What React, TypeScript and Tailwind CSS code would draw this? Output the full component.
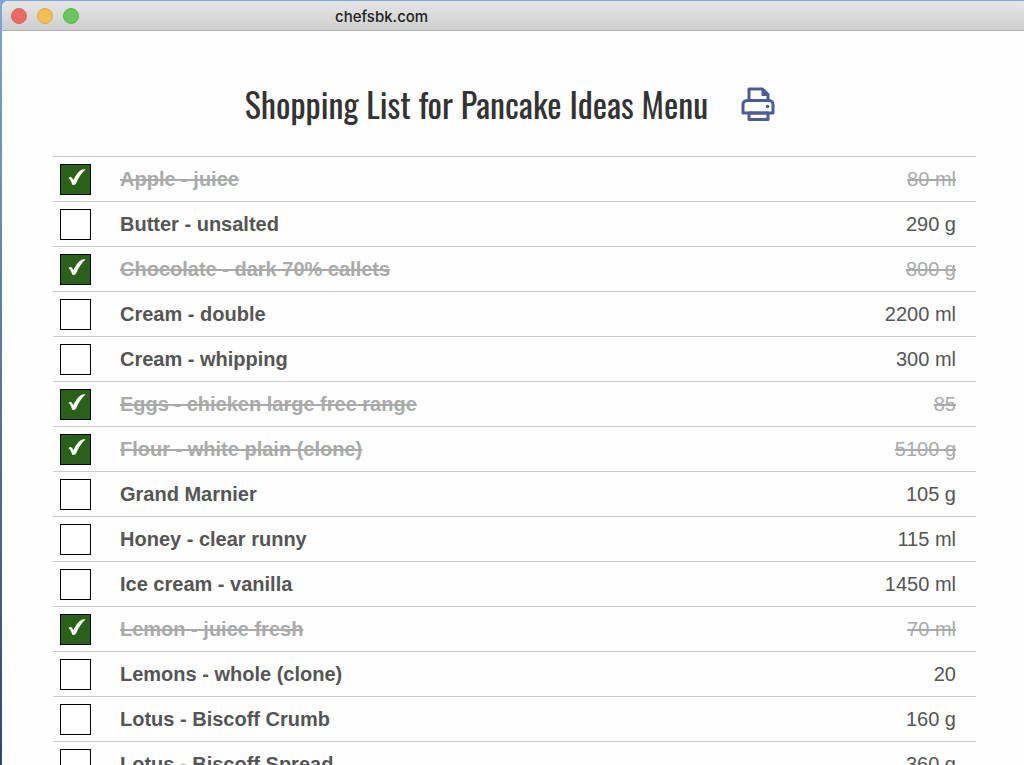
import { useState } from 'react';

interface Item {
  id: number;
  name: string;
  amount: string;
  done: boolean;
}

const initialItems: Item[] = [
  { id: 1, name: 'Apple - juice', amount: '80 ml', done: true },
  { id: 2, name: 'Butter - unsalted', amount: '290 g', done: false },
  { id: 3, name: 'Chocolate - dark 70% callets', amount: '800 g', done: true },
  { id: 4, name: 'Cream - double', amount: '2200 ml', done: false },
  { id: 5, name: 'Cream - whipping', amount: '300 ml', done: false },
  { id: 6, name: 'Eggs - chicken large free range', amount: '85', done: true },
  { id: 7, name: 'Flour - white plain (clone)', amount: '5100 g', done: true },
  { id: 8, name: 'Grand Marnier', amount: '105 g', done: false },
  { id: 9, name: 'Honey - clear runny', amount: '115 ml', done: false },
  { id: 10, name: 'Ice cream - vanilla', amount: '1450 ml', done: false },
  { id: 11, name: 'Lemon - juice fresh', amount: '70 ml', done: true },
  { id: 12, name: 'Lemons - whole (clone)', amount: '20', done: false },
  { id: 13, name: 'Lotus - Biscoff Crumb', amount: '160 g', done: false },
  { id: 14, name: 'Lotus - Biscoff Spread', amount: '360 g', done: false },
];

export default function App() {
  const [items, setItems] = useState(initialItems);

  const toggle = (id: number) => {
    setItems(items.map((item) => (item.id === id ? { ...item, done: !item.done } : item)));
  };

  return (
    <div className="h-screen overflow-hidden bg-linear-to-b from-[#7fa5d6] to-[#2f4a70] pl-[2px] pt-px font-['Liberation_Sans',Arial,sans-serif]">
      <div className="flex h-full flex-col overflow-hidden rounded-tl-md bg-[#fefefe]">
        <TitleBar title="chefsbk.com" />
        <main className="min-h-0 flex-1 overflow-hidden pl-[51px] pr-12 pt-12">
          <header className="mb-7 flex h-[49px] items-center justify-center gap-8 pr-2">
            <h1 className="whitespace-nowrap font-['Oswald','Liberation_Sans_Narrow',sans-serif] text-[34px] font-normal leading-[48px] text-[#333]">
              Shopping List for Pancake Ideas Menu
            </h1>
            <button type="button" title="Print" onClick={() => window.print()} className="cursor-pointer">
              <PrintIcon />
            </button>
          </header>
          <table className="w-full border-collapse text-xl text-[#555]">
            <tbody>
              {items.map((item) => (
                <ItemRow key={item.id} item={item} onToggle={toggle} />
              ))}
            </tbody>
          </table>
        </main>
      </div>
    </div>
  );
}

function TitleBar({ title }: { title: string }) {
  return (
    <div className="flex h-[30px] shrink-0 items-center border-b border-[#b1b1b1] bg-linear-to-b from-[#e6e6e6] to-[#cecece] pl-[9px]">
      <div className="flex gap-[10px]">
        <button type="button" aria-label="Close" className="size-4 rounded-full border border-[#d9665c] bg-[#ec6b60]" />
        <button type="button" aria-label="Minimise" className="size-4 rounded-full border border-[#d9ae4b] bg-[#f4bf50]" />
        <button type="button" aria-label="Zoom" className="size-4 rounded-full border border-[#5cb54c] bg-[#65c956]" />
      </div>
      <span className="ml-64 pt-0.5 font-['Inter',sans-serif] text-[15px] font-medium leading-5 text-[#222]">{title}</span>
    </div>
  );
}

interface ItemRowProps {
  item: Item;
  onToggle: (id: number) => void;
}

function ItemRow({ item, onToggle }: ItemRowProps) {
  const inputId = `item-${item.id}`;

  return (
    <tr className={`h-[45px] border-t border-[#ccc] ${item.done ? 'text-[#aaa] line-through' : ''}`}>
      <td className="w-[67px] pl-[7px]">
        <span className="relative block size-[31px]">
          <input
            id={inputId}
            type="checkbox"
            checked={item.done}
            onChange={() => onToggle(item.id)}
            className="block size-full cursor-pointer appearance-none border border-black bg-white checked:bg-[#2a6118]"
          />
          {item.done && <CheckMark />}
        </span>
      </td>
      <th scope="row" className="text-left font-bold">
        <label htmlFor={inputId} className="cursor-pointer">
          {item.name}
        </label>
      </th>
      <td className="pr-5 text-right">{item.amount}</td>
    </tr>
  );
}

function CheckMark() {
  return (
    <svg className="pointer-events-none absolute inset-0 size-full" viewBox="0 0 31 31" fill="white">
      <path d="M8.5 14.2c.8-1.100 2.100-1.500 3.100-.8.700.5 1.200 1.600 1.600 2.900C15.500 11.500 18.300 7.600 21.300 6c1.300-.7 3-.8 4.200-.4-4 3.500-6.800 8-9.300 13.600-.8 1.600-3.300 2.300-4 1.200-.7-2.200-1.700-5.200-3.700-6.200z" />
    </svg>
  );
}

function PrintIcon() {
  return (
    <svg className="size-9" viewBox="0 0 36 36" fill="none" stroke="#4b5b9f" strokeWidth="3" strokeLinejoin="round">
      <path d="M9 15V3h13.500L28 8.500V15" />
      <path d="M22.500 3v6H28z" fill="#4b5b9f" strokeWidth="2" />
      <path d="M9 27H3v-8.500a4 4 0 0 1 4-4h22a4 4 0 0 1 4 4V27H9z" />
      <path d="M9 27h19v6.500H9z" />
      <circle cx="27.500" cy="20.500" r="1.800" fill="#4b5b9f" stroke="none" />
    </svg>
  );
}
